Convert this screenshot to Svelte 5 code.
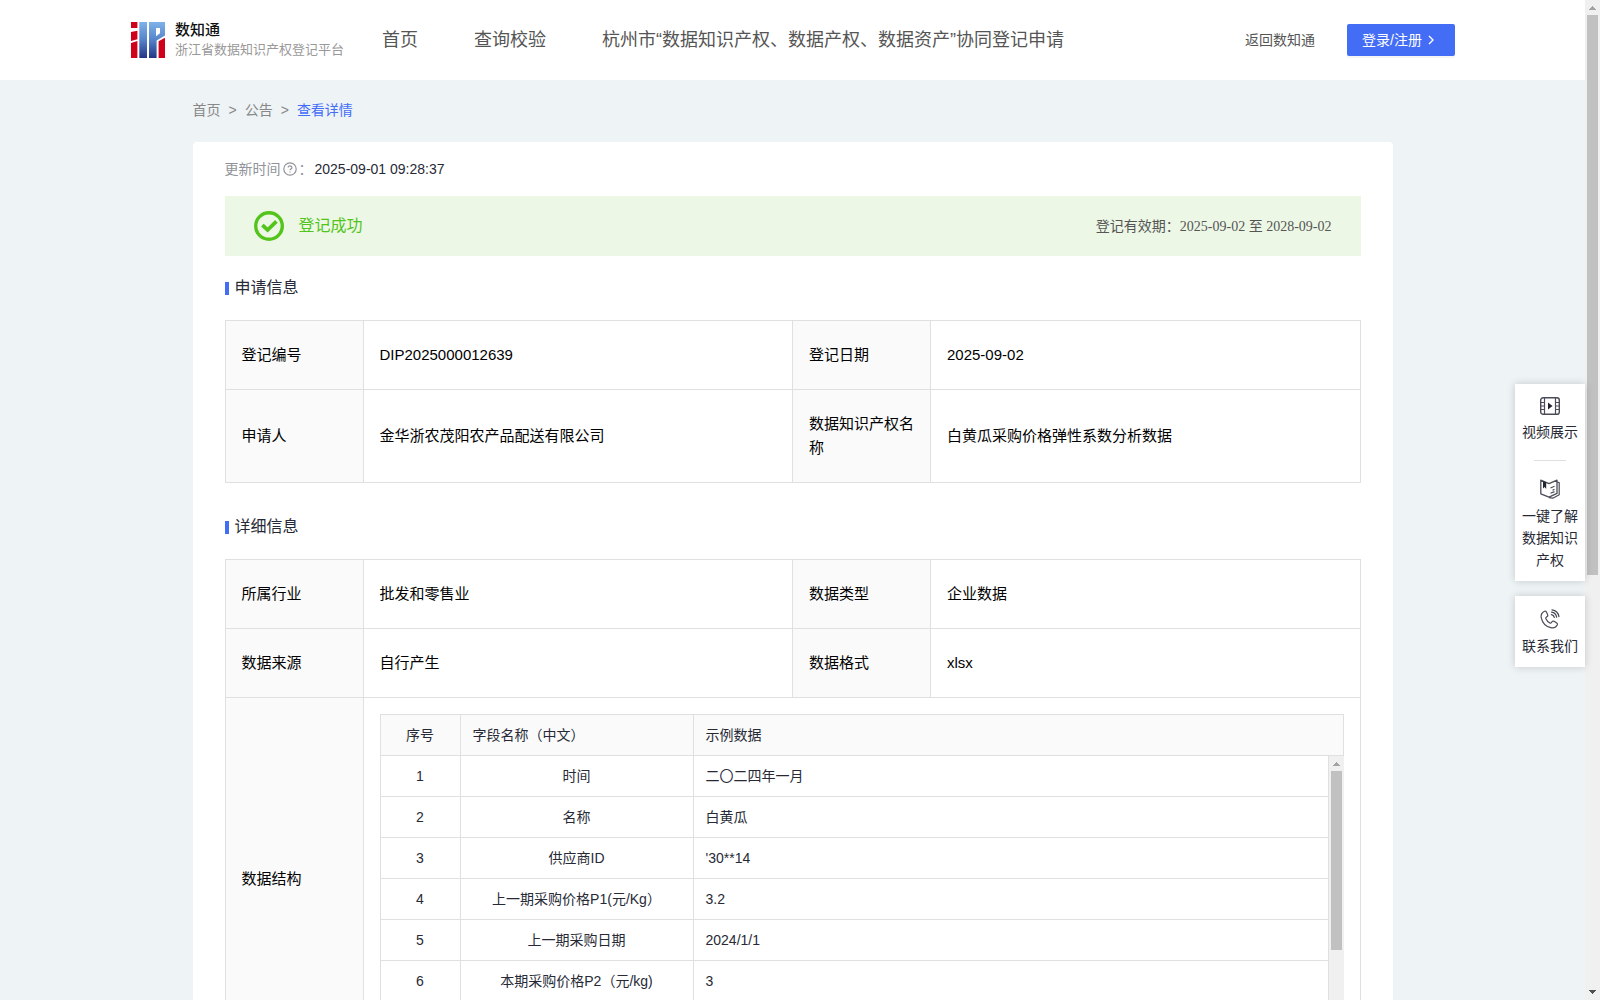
<script>
  const nav = ['首页', '查询校验', '杭州市“数据知识产权、数据产权、数据资产”协同登记申请'];

  const application = [
    [['登记编号', 'DIP2025000012639'], ['登记日期', '2025-09-02']],
    [['申请人', '金华浙农茂阳农产品配送有限公司'], ['数据知识产权名称', '白黄瓜采购价格弹性系数分析数据']]
  ];

  const details = [
    [['所属行业', '批发和零售业'], ['数据类型', '企业数据']],
    [['数据来源', '自行产生'], ['数据格式', 'xlsx']]
  ];

  const fields = [
    ['时间', '二〇二四年一月'],
    ['名称', '白黄瓜'],
    ['供应商ID', "'30**14"],
    ['上一期采购价格P1(元/Kg）', '3.2'],
    ['上一期采购日期', '2024/1/1'],
    ['本期采购价格P2（元/kg)', '3']
  ];
</script>

{#snippet infoRows(rows)}
  {#each rows as row}
    <tr>
      {#each row as [label, value]}
        <th scope="row">{label}</th>
        <td>{value}</td>
      {/each}
    </tr>
  {/each}
{/snippet}

{#snippet arrow(dir)}
  <svg class="arrow {dir}" width="15" height="15" viewBox="0 0 15 15" aria-hidden="true" shape-rendering="crispEdges">
    {#if dir === 'up'}
      <path d="M4 10V9h1V8h1V7h1V6h1v1h1v1h1v1h1v1z" />
    {:else}
      <path d="M4 5v1h1v1h1v1h1v1h1V8h1V7h1V6h1V5z" />
    {/if}
  </svg>
{/snippet}

<div class="window">
  <div class="page">
    <header>
      <a class="brand" href="#home">
        <svg width="34" height="36" viewBox="0 0 34 36" aria-hidden="true">
          <defs>
            <linearGradient id="blue" x1="0" y1="0" x2="0" y2="36" gradientUnits="userSpaceOnUse">
              <stop offset="0" stop-color="#7fb2ea" />
              <stop offset="0.5" stop-color="#5583c8" />
              <stop offset="1" stop-color="#243585" />
            </linearGradient>
          </defs>
          <path fill="#d0021b" d="M0 0h6.400v6H0zM0 10l6.400-1.200v8.400L0 19zM0 21l6.400-2v17H0z" />
          <path fill="url(#blue)" d="M8.300 0h7.700v36H8.300zM18 0h16v13.500l-8.400 5V36H18z" />
          <path fill="#fff" d="M25 6h4v5.200l-4 3z" />
          <path fill="#d0021b" d="M27.600 19.200l6.400-3.400V36h-6.400z" />
        </svg>
        <span class="names">
          <strong>数知通</strong>
          <small>浙江省数据知识产权登记平台</small>
        </span>
      </a>
      <nav>
        {#each nav as item}
          <a href="#nav">{item}</a>
        {/each}
      </nav>
      <a class="back" href="#back">返回数知通</a>
      <button class="login" type="button">
        登录/注册
        <svg width="6" height="10" viewBox="0 0 6 10" aria-hidden="true">
          <path d="M1 1l4 4-4 4" fill="none" stroke="#fff" stroke-width="1.4" />
        </svg>
      </button>
    </header>

    <div class="column">
      <nav class="crumbs" aria-label="位置">
        <a href="#home">首页</a><span>&gt;</span><a href="#notice">公告</a><span>&gt;</span><a class="current" href="#detail">查看详情</a>
      </nav>

      <main>
        <p class="updated">
          <span>更新时间</span>
          <svg width="14" height="14" viewBox="0 0 14 14" aria-hidden="true" fill="none" stroke="#909399">
            <circle cx="7" cy="7" r="6.2" stroke-width="1.2" />
            <path d="M5.1 5.6a1.9 1.7 0 1 1 2.7 1.5q-.8.4-.8 1.2M7 9.4v1.2" stroke-width="1.2" />
          </svg>
          <span class="colon">：</span>
          <time>2025-09-01 09:28:37</time>
        </p>

        <div class="banner">
          <svg width="30" height="30" viewBox="0 0 30 30" aria-hidden="true" fill="none" stroke="#52c41a">
            <circle cx="15" cy="15" r="13.3" stroke-width="3.4" />
            <path d="M8.400 14.200l5.200 4.800 8.800-8.600" stroke-width="3.800" />
          </svg>
          <span class="status">登记成功</span>
          <span class="validity">登记有效期：<span class="dates">2025-09-02 至 2028-09-02</span></span>
        </div>

        <h2>申请信息</h2>
        <table class="info">
          <colgroup><col class="label" /><col /><col class="label" /><col /></colgroup>
          <tbody>
            {@render infoRows(application)}
          </tbody>
        </table>

        <h2>详细信息</h2>
        <table class="info">
          <colgroup><col class="label" /><col /><col class="label" /><col /></colgroup>
          <tbody>
            {@render infoRows(details)}
            <tr>
              <th scope="row">数据结构</th>
              <td class="nested" colspan="3">
                <table class="fields head">
                  <colgroup><col class="no" /><col class="name" /><col /></colgroup>
                  <thead>
                    <tr><th class="center">序号</th><th>字段名称（中文）</th><th>示例数据</th></tr>
                  </thead>
                </table>
                <div class="scroller">
                  <table class="fields">
                    <colgroup><col class="no" /><col class="name" /><col /></colgroup>
                    <tbody>
                      {#each fields as [name, sample], i}
                        <tr>
                          <td class="center">{i + 1}</td>
                          <td class="center">{name}</td>
                          <td>{sample}</td>
                        </tr>
                      {/each}
                    </tbody>
                  </table>
                  <div class="rail">
                    {@render arrow('up')}
                    <div class="thumb"></div>
                  </div>
                </div>
              </td>
            </tr>
          </tbody>
        </table>
      </main>
    </div>
  </div>

  <aside>
    <div class="panel">
      <a href="#video">
        <svg width="20" height="18" viewBox="0 0 20 18" aria-hidden="true" fill="none" stroke="#4a4d58">
          <rect x=".7" y=".7" width="18.6" height="16.6" rx="2.4" stroke-width="1.4" />
          <path d="M4.5 1v16M15.5 1v16M1 5.5h3.500M1 9h3.500M1 12.500h3.500M15.500 5.500H19M15.500 9H19M15.500 12.500H19" stroke-width="1.200" />
          <path d="M8 5.500v7L12.600 9z" fill="#23262f" stroke="none" />
        </svg>
        视频展示
      </a>
      <hr />
      <a href="#guide">
        <svg width="20" height="20" viewBox="0 0 20 20" aria-hidden="true" fill="none" stroke="#4a4d58" stroke-linejoin="round">
          <path d="M.8 1.200l8.200 3.400 8-3.400v13.200l-8 3.800L.8 14.800z" stroke-width="1.300" />
          <path d="M17 3l2.200.6v12.200l-6.400 3.400-3.800-.6" stroke-width="1.200" />
          <path d="M10.500 9l4-1.700M10.500 14.300l4-1.700M12.500 11.200l2-.8" stroke-width="1.200" />
          <path d="M3 2v7.500l1.600-1.400 1.600 2V3.400z" fill="#23262f" stroke="none" />
        </svg>
        一键了解数据知识产权
      </a>
    </div>
    <div class="panel">
      <a href="#contact">
        <svg width="20" height="20" viewBox="0 0 20 20" aria-hidden="true" fill="none" stroke="#4a4d58" stroke-linecap="round">
          <path d="M4.600 2.200C2.200 3.400.6 5.600 1.300 8.800c1 4.600 4.800 8.700 9.500 9.900 3 .8 5.200-.6 6.400-2.700.4-.8.200-1.500-.5-2l-2.600-1.700c-.8-.5-1.500-.3-2 .4l-.8 1c-.4.5-.9.600-1.400.3-1.800-1-3.200-2.500-4-4.300-.3-.6-.1-1.100.4-1.500l.8-.6c.7-.5.9-1.200.5-2L6.300 2.800c-.4-.7-1-.9-1.700-.6z" stroke-width="1.200" />
          <path d="M11.400 5.600c1.500.3 2.500 1.200 2.900 2.800M11.600 3.200c2.700.4 4.600 2.200 5 5M12 .9c3.700.5 6.300 2.900 6.900 6.600" stroke-width="1.300" />
        </svg>
        联系我们
      </a>
    </div>
  </aside>

  <div class="rail">
    {@render arrow('up')}
    <div class="thumb tall"></div>
    {@render arrow('down')}
  </div>
</div>

<style>
  :global(body) {
    font-family: 'Liberation Sans', 'Noto Sans CJK SC', sans-serif;
    font-size: 14px;
    line-height: 22px;
    color: #272a36;
    background: #eef3f6;
  }
  *,
  *::before {
    box-sizing: border-box;
  }
  a {
    color: inherit;
    text-decoration: none;
  }
  svg {
    flex: none;
  }

  .window {
    position: relative;
    display: flex;
    height: 100vh;
    overflow: hidden;
  }
  .page {
    flex: 1;
    min-width: 0;
  }

  header {
    display: flex;
    align-items: center;
    height: 80px;
    padding: 0 130px 0 131px;
    background: #fff;
    color: #555;
    white-space: nowrap;
  }
  .brand {
    display: flex;
    align-items: center;
    gap: 10px;
    width: 251px;
  }
  .names {
    display: flex;
    flex-direction: column;
  }
  strong {
    font-size: 15px;
    font-weight: 500;
    line-height: 20px;
    color: #111;
  }
  small {
    font-size: 13px;
    line-height: 20px;
    color: #999;
  }
  header nav {
    display: flex;
    gap: 56px;
    font-size: 18px;
    line-height: 24px;
  }
  .back {
    margin-left: auto;
  }
  .login {
    display: flex;
    align-items: center;
    gap: 6px;
    height: 32px;
    margin-left: 32px;
    padding: 0 21px 0 15px;
    border: 0;
    border-radius: 2px;
    background: #446df6;
    box-shadow: 0 2px 0 rgba(0, 0, 0, 0.04);
    color: #fff;
    font: inherit;
  }

  .column {
    max-width: 1200px;
    margin: 0 auto;
  }
  .crumbs {
    display: flex;
    gap: 8px;
    padding: 19px 0 21px;
    color: #888;
  }
  .crumbs .current {
    color: #446df6;
  }
  main {
    padding: 16px 32px;
    border-radius: 4px;
    background: #fff;
  }
  .updated {
    display: flex;
    align-items: center;
    gap: 2px;
    margin: 0 0 16px;
    color: #909399;
  }
  .updated time {
    color: #272a36;
  }

  .banner {
    display: flex;
    align-items: center;
    height: 60px;
    padding: 0 29px;
    background: #ecf7e6;
  }
  .status {
    margin-left: 15px;
    font-size: 16px;
    color: #52c41a;
  }
  .validity {
    margin-left: auto;
    color: #555;
  }
  .dates {
    font-family: 'Liberation Serif', 'Noto Sans CJK SC', serif;
  }

  h2 {
    display: flex;
    align-items: center;
    gap: 6px;
    margin: 20px 0 20px;
    font-size: 16px;
    font-weight: 400;
    line-height: 24px;
  }
  h2::before {
    content: '';
    width: 4px;
    height: 13px;
    background: #446df6;
  }
  .info + h2 {
    margin-top: 32px;
  }

  table {
    width: 100%;
    table-layout: fixed;
    border-collapse: collapse;
  }
  th,
  td {
    border: 1px solid #e0e0e0;
    font-weight: 400;
    text-align: left;
  }
  th {
    background: #fafafa;
  }
  .label {
    width: 138px;
  }
  .info {
    font-size: 15px;
    line-height: 24px;
    color: #000;
  }
  .info th,
  .info td {
    padding: 22px 14px 22px 16px;
  }
  .info .nested {
    padding: 16px;
  }

  .fields {
    font-size: 14px;
    line-height: 24px;
    color: #272a36;
  }
  .info .fields th,
  .info .fields td {
    padding: 8px 12px;
  }
  .info .fields .center {
    text-align: center;
  }
  .no {
    width: 80px;
  }
  .name {
    width: 233px;
  }
  .scroller {
    display: flex;
    height: 288px;
    overflow: hidden;
  }
  .scroller .fields {
    flex: 1;
    align-self: flex-start;
  }
  .scroller tr:first-child td {
    border-top: 0;
  }

  .rail {
    display: flex;
    flex: none;
    flex-direction: column;
    width: 15px;
    background: #f0f0f0;
  }
  .thumb {
    height: 62%;
    margin: 0 2px;
    background: #c1c1c1;
  }
  .thumb.tall {
    height: 56%;
  }
  .arrow {
    fill: #a3a3a3;
  }
  .arrow.down {
    margin-top: auto;
    fill: #505050;
  }

  aside {
    position: absolute;
    top: 384px;
    right: 15px;
    display: flex;
    flex-direction: column;
    gap: 15px;
    width: 70px;
    text-align: center;
  }
  .panel {
    padding: 13px 7px 10px;
    background: #fff;
    box-shadow: 0 0 8px rgba(0, 0, 0, 0.18);
  }
  .panel a {
    display: flex;
    flex-direction: column;
    align-items: center;
    gap: 6px;
  }
  hr {
    width: 32px;
    height: 1px;
    margin: 17px auto 18px;
    border: 0;
    background: #e0e0e0;
  }
</style>
